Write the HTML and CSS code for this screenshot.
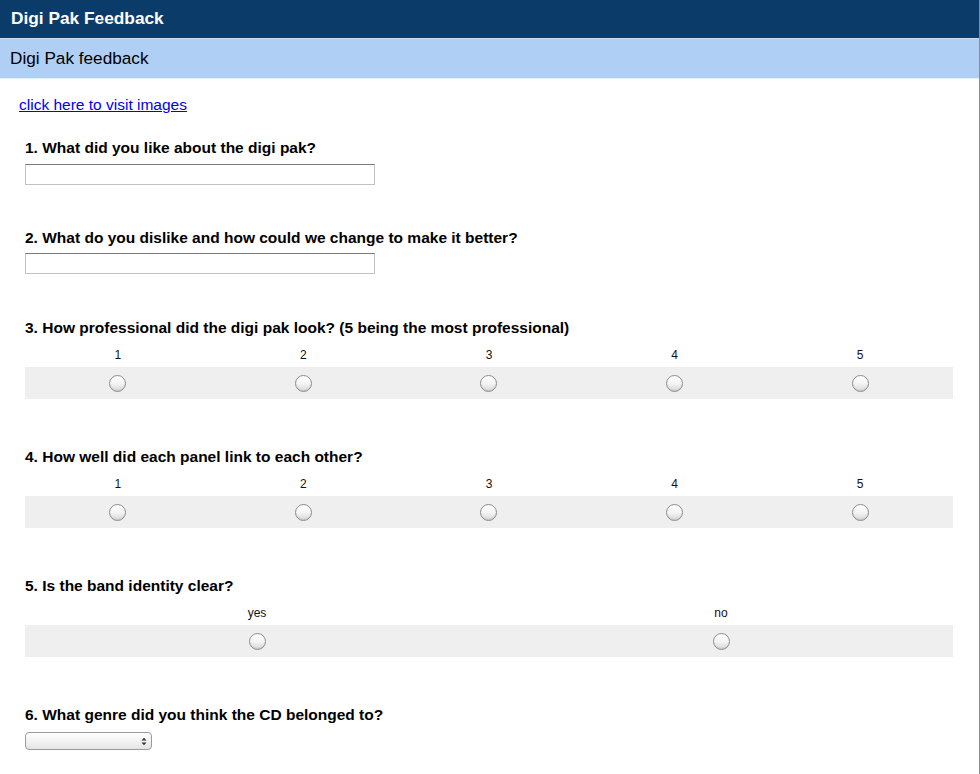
FILE: index.html
```html
<!DOCTYPE html>
<html>
<head>
<meta charset="utf-8">
<title>Digi Pak Feedback</title>
<link rel="stylesheet" href="styles.css">
</head>
<body>
<div class="page">
  <div class="topbar">Digi Pak Feedback</div>
  <div class="subbar">Digi Pak feedback</div>
  <div class="content">
    <a class="link" href="#">click here to visit images</a>

    <div class="q q1">
      <div class="qlabel">1. What did you like about the digi pak?</div>
      <input class="text" type="text">
    </div>

    <div class="q q2">
      <div class="qlabel">2. What do you dislike and how could we change to make it better?</div>
      <input class="text" type="text">
    </div>

    <div class="q q3">
      <div class="qlabel">3. How professional did the digi pak look? (5 being the most professional)</div>
      <div class="scale five">
        <div class="nums"><span>1</span><span>2</span><span>3</span><span>4</span><span>5</span></div>
        <div class="band">
          <span><input type="radio" name="a"></span>
          <span><input type="radio" name="a"></span>
          <span><input type="radio" name="a"></span>
          <span><input type="radio" name="a"></span>
          <span><input type="radio" name="a"></span>
        </div>
      </div>
    </div>

    <div class="q q4">
      <div class="qlabel">4. How well did each panel link to each other?</div>
      <div class="scale five">
        <div class="nums"><span>1</span><span>2</span><span>3</span><span>4</span><span>5</span></div>
        <div class="band">
          <span><input type="radio" name="b"></span>
          <span><input type="radio" name="b"></span>
          <span><input type="radio" name="b"></span>
          <span><input type="radio" name="b"></span>
          <span><input type="radio" name="b"></span>
        </div>
      </div>
    </div>

    <div class="q q5">
      <div class="qlabel">5. Is the band identity clear?</div>
      <div class="scale two">
        <div class="nums"><span>yes</span><span>no</span></div>
        <div class="band">
          <span><input type="radio" name="c"></span>
          <span><input type="radio" name="c"></span>
        </div>
      </div>
    </div>

    <div class="q q6">
      <div class="qlabel">6. What genre did you think the CD belonged to?</div>
      <div class="select"><span class="arrows"><svg width="6" height="9" viewBox="0 0 6 9"><path d="M0.5 3.5 L3 0.8 L5.5 3.5 Z M0.5 5.5 L3 8.2 L5.5 5.5 Z" fill="#333"/></svg></span></div>
    </div>
  </div>
</div>
</body>
</html>
```

FILE: styles.css
```css
html, body {
  margin: 0;
  padding: 0;
  background: #ffffff;
}
body {
  font-family: "Liberation Sans", Arial, Helvetica, sans-serif;
  color: #000;
}
.page {
  width: 979px;
  height: 774px;
  border-right: 1px solid #8c8c8c;
  overflow: hidden;
}
.topbar {
  height: 38px;
  line-height: 36px;
  background: #0b3c69;
  color: #ffffff;
  font-weight: bold;
  font-size: 17.3px;
  padding-left: 11px;
  border-bottom: 1px solid #c9def4;
}
.subbar {
  height: 39px;
  line-height: 39px;
  background: #b0cff4;
  color: #000;
  font-size: 17.2px;
  padding-left: 10px;
  border-bottom: 1px solid #e4eefa;
}
.content {
  padding: 17px 26px 0 25px;
}
.link {
  display: block;
  margin-left: -6px;
  color: #0000ee;
  text-decoration: underline;
  font-size: 15.5px;
  line-height: 18px;
  width: max-content;
}
.qlabel {
  font-weight: bold;
  font-size: 15.5px;
  line-height: 18px;
  color: #000;
}
.q1 { margin-top: 25px; }
.q2 { margin-top: 44px; }
.q3 { margin-top: 45px; }
.q4, .q5, .q6 { margin-top: 49px; }

.text {
  display: block;
  box-sizing: border-box;
  width: 350px;
  height: 21px;
  margin: 7px 0 0 0;
  padding: 0;
  border: 1px solid #c2c2c2;
  border-top-color: #7a7a7a;
  background: #fff;
}
.q2 .text { margin-top: 6px; }

.scale { width: 928px; }
.nums {
  display: grid;
  margin-top: 11px;
  font-size: 12px;
  line-height: 14px;
  height: 14px;
  color: #111;
}
.nums span { text-align: center; }
.band {
  display: grid;
  margin-top: 5px;
  height: 32px;
  background: #efefef;
  align-items: center;
}
.band span {
  display: flex;
  justify-content: center;
}
.five .nums, .five .band { grid-template-columns: repeat(5, 1fr); }
.two .nums, .two .band { grid-template-columns: repeat(2, 1fr); }

input[type="radio"] {
  -webkit-appearance: none;
  appearance: none;
  margin: 0;
  width: 17px;
  height: 17px;
  border-radius: 50%;
  border: 1px solid #8d8d8d;
  background: linear-gradient(#ffffff 0%, #f4f4f4 50%, #d8d8d8 100%);
  box-shadow: inset 0 -1px 1px rgba(0,0,0,0.08);
  box-sizing: border-box;
}

.select {
  position: relative;
  box-sizing: border-box;
  margin-top: 8px;
  width: 127px;
  height: 18px;
  border: 1px solid #9a9a9a;
  border-radius: 4px;
  background: linear-gradient(#ffffff, #f0f0f0 60%, #e4e4e4);
  display: flex;
  justify-content: flex-end;
  align-items: center;
}
.arrows {
  display: flex;
  margin-right: 4px;
}
```
